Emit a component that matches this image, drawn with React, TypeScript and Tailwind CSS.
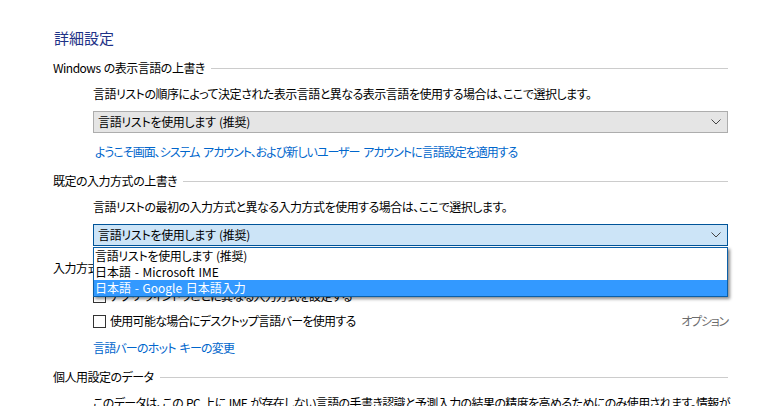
import React from "react"

const font = "font-['Noto_Sans_CJK_JP','Noto_Sans',sans-serif] [font-feature-settings:'palt'] tracking-[-0.5px] [word-spacing:1px]"

const Chevron = () => (
  <svg width="10" height="6" viewBox="0 0 10 6" className="shrink-0">
    <path d="M0.5 0.5 L5 5 L9.5 0.5" fill="none" stroke="#444" strokeWidth="1" />
  </svg>
)

const Header = ({ label, mt }: { label: string; mt: string }) => (
  <div className={`flex items-center h-[20px] ${mt}`}>
    <span className="whitespace-nowrap">{label}</span>
    <div className="flex-1 h-px bg-[#cccccc] ml-[6px]" />
  </div>
)

const Checkbox = () => (
  <span className="inline-block w-[13px] h-[13px] border border-[#333333] bg-white shrink-0" />
)

const options = [
  "言語リストを使用します (推奨)",
  "日本語 - Microsoft IME",
  "日本語 - Google 日本語入力",
]

export default function App() {
  return (
    <div className={`w-[764px] h-[406px] overflow-hidden bg-white text-[12px] text-black pl-[53px] pr-[36px] pt-[28px] ${font}`}>
      <div className="h-[20px] leading-[20px] text-[15px] text-[#1e3287] pl-px tracking-normal">詳細設定</div>

      <Header label="Windows の表示言語の上書き" mt="mt-[10px]" />
      <div className="pl-[40px] mt-[6px] h-[20px] leading-[20px] whitespace-nowrap">
        言語リストの順序によって決定された表示言語と異なる表示言語を使用する場合は、ここで選択します。
      </div>
      <div className="ml-[40px] mt-[7px] h-[22px] flex items-center justify-between border border-[#adadad] bg-[#e5e5e5] pl-[4px] pr-[6px]">
        <span className="tracking-[-0.3px]">{options[0]}</span>
        <Chevron />
      </div>
      <div className="pl-[42px] mt-[9px] h-[20px] leading-[20px] text-[#0066cc] whitespace-nowrap tracking-[-1px] [word-spacing:2px]">
        ようこそ画面、システム アカウント、および新しいユーザー アカウントに言語設定を適用する
      </div>

      <Header label="既定の入力方式の上書き" mt="mt-[9px]" />
      <div className="pl-[40px] mt-[6px] h-[20px] leading-[20px] whitespace-nowrap">
        言語リストの最初の入力方式と異なる入力方式を使用する場合は、ここで選択します。
      </div>
      <div className="relative ml-[40px] mt-[7px] z-10">
        <div className="h-[22px] flex items-center justify-between border border-[#005499] bg-[#cce4f7] pl-[4px] pr-[6px]">
          <span className="tracking-[-0.3px]">{options[0]}</span>
          <Chevron />
        </div>
        <div className="absolute left-0 right-0 top-[23px] border border-[#0a5fa8] bg-white shadow-[2px_2px_3px_rgba(0,0,0,0.45)]">
          {options.map((o, i) => (
            <div
              key={o}
              className={`h-[16px] leading-[16px] pl-[1px] whitespace-nowrap ${i === 0 ? "tracking-[-0.3px]" : "tracking-normal"} ${i === 2 ? "bg-[#3399ff] text-white" : ""}`}
            >
              {o}
            </div>
          ))}
        </div>
      </div>

      <Header label="入力方式の切り替え" mt="mt-[12px]" />
      <div className="pl-[40px] mt-[8px] h-[20px] flex items-center gap-[4px] whitespace-nowrap">
        <Checkbox />
        <span className="tracking-[-0.7px]">アプリ ウィンドウごとに異なる入力方式を設定する</span>
      </div>
      <div className="pl-[40px] mt-[5px] h-[20px] flex items-center whitespace-nowrap">
        <Checkbox />
        <span className="ml-[4px] tracking-[-0.7px]">使用可能な場合にデスクトップ言語バーを使用する</span>
        <span className="ml-auto text-[#6d6d6d] tracking-[-1.2px]">オプション</span>
      </div>
      <div className="pl-[40px] mt-[7px] h-[20px] leading-[20px] text-[#0066cc] whitespace-nowrap tracking-[-0.8px] [word-spacing:2px]">
        言語バーのホット キーの変更
      </div>

      <Header label="個人用設定のデータ" mt="mt-[9px]" />
      <div className="pl-[40px] mt-[6px] h-[20px] leading-[20px] whitespace-nowrap tracking-[-0.6px]">
        このデータは、この PC 上に IME が存在しない言語の手書き認識と予測入力の結果の精度を高めるためにのみ使用されます。情報が
      </div>
    </div>
  )
}
